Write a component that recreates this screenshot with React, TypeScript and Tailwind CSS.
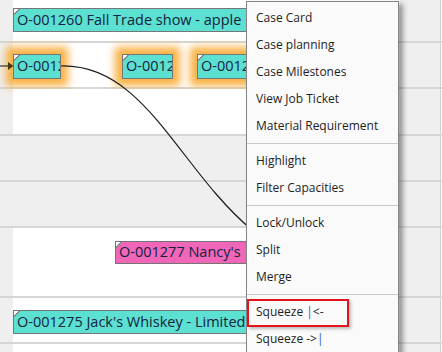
import type { ReactNode } from 'react';

// Gantt rows (top to bottom). Heights include the 2px grid line at the bottom.
const ROWS = [
  { h: 43, grey: false },
  { h: 46, grey: false },
  { h: 47, grey: false },
  { h: 46, grey: true },
  { h: 46, grey: true },
  { h: 70, grey: false },
  { h: 46, grey: false },
  { h: 20, grey: false },
];

function Bar({
  left,
  top,
  width,
  height,
  color,
  glow = false,
  children,
}: {
  left: number;
  top: number;
  width: number;
  height: number;
  color: string;
  glow?: boolean;
  children: ReactNode;
}) {
  return (
    <div
      className={`absolute overflow-hidden whitespace-nowrap border border-[#767676] pl-[3px] text-[14.5px] leading-none text-[#15233d] ${
        glow ? 'shadow-[0_0_8px_7px_rgba(248,165,35,0.85)]' : ''
      }`}
      style={{ left, top, width, height, backgroundColor: color }}
    >
      <span className="absolute top-[-1px] left-[-1px] h-[7px] w-[7px] bg-[linear-gradient(135deg,#ffffff_0_46%,#8a8a8a_46%_62%,transparent_62%)]" />
      <span className="flex h-full items-center">{children}</span>
    </div>
  );
}

function GanttRow({ h, grey, children }: { h: number; grey: boolean; children?: ReactNode }) {
  return (
    <div className="flex shrink-0 border-b-2 border-[#d6d6d6]" style={{ height: h }}>
      <div className="w-[13px] shrink-0 bg-[#efefef]" />
      <div className={`relative w-[387px] shrink-0 ${grey ? 'bg-[#efefef]' : 'bg-white'}`}>
        {children}
      </div>
      <div className="w-[40px] shrink-0 bg-[#efefef]" />
      <div className="w-[1px] shrink-0 bg-[#cfcfcf]" />
      <div className="w-[1px] shrink-0 bg-white" />
    </div>
  );
}

function MenuItem({ children }: { children: ReactNode }) {
  return (
    <div className="flex h-[27px] items-center pl-[9px]">
      <span className="whitespace-pre">{children}</span>
    </div>
  );
}

function Separator() {
  return (
    <div className="flex h-[8px] items-center">
      <div className="h-px w-full bg-[#c9c9c9]" />
    </div>
  );
}

const Pipe = () => <span className="text-[#2f5aa8]">|</span>;

export default function App() {
  return (
    <div className="relative h-[352px] w-[442px] overflow-hidden bg-white font-['Open_Sans',sans-serif]">
      <div className="flex flex-col">
        <GanttRow {...ROWS[0]}>
          <Bar left={0} top={8} width={260} height={24} color="#5ce0d2">
            O-001260 Fall Trade show - apple
          </Bar>
        </GanttRow>
        <GanttRow {...ROWS[1]}>
          <Bar left={0} top={11} width={48} height={25} color="#5ce0d2" glow>
            O-0012
          </Bar>
          <Bar left={109} top={11} width={51} height={25} color="#5ce0d2" glow>
            O-0012
          </Bar>
          <Bar left={184} top={11} width={70} height={25} color="#5ce0d2" glow>
            O-0012
          </Bar>
        </GanttRow>
        <GanttRow {...ROWS[2]} />
        <GanttRow {...ROWS[3]} />
        <GanttRow {...ROWS[4]} />
        <GanttRow {...ROWS[5]}>
          <Bar left={102} top={13} width={150} height={23} color="#f066b8">
            O-001277 Nancy's
          </Bar>
        </GanttRow>
        <GanttRow {...ROWS[6]}>
          <Bar left={0} top={12} width={250} height={24} color="#5ce0d2">
            O-001275 Jack's Whiskey - Limited
          </Bar>
        </GanttRow>
        <GanttRow {...ROWS[7]} />
      </div>

      {/* dependency link */}
      <svg className="pointer-events-none absolute inset-0" width={442} height={352} viewBox="0 0 442 352">
        <path d="M0 66 H9" stroke="#333" strokeWidth={1.2} />
        <path d="M8 62 L13.5 66 L8 70 Z" fill="#4a3a10" />
        <path d="M61 66 C 145 64, 178 168, 252 230" fill="none" stroke="#1a1a1a" strokeWidth={1.2} />
      </svg>

      {/* context menu */}
      <div className="absolute top-[1px] left-[246px] h-[370px] w-[153px] border border-[#858585] bg-[#fafafa] pt-[2px] text-[12px] text-[#1e1e1e] shadow-[4px_3px_5px_rgba(0,0,0,0.38)]">
        <MenuItem>Case Card</MenuItem>
        <MenuItem>Case planning</MenuItem>
        <MenuItem>Case Milestones</MenuItem>
        <MenuItem>View Job Ticket</MenuItem>
        <MenuItem>Material Requirement</MenuItem>
        <Separator />
        <MenuItem>Highlight</MenuItem>
        <MenuItem>Filter Capacities</MenuItem>
        <Separator />
        <MenuItem>Lock/Unlock</MenuItem>
        <MenuItem>Split</MenuItem>
        <MenuItem>Merge</MenuItem>
        <Separator />
        <div className="relative">
          <MenuItem>
            {'Squeeze '}
            <Pipe />
            {'<-'}
          </MenuItem>
          <span className="absolute top-[1px] left-0 h-[28px] w-[102px] border-2 border-[#e3141c] shadow-[2px_2px_3px_rgba(0,0,0,0.25)]" />
        </div>
        <MenuItem>
          {'Squeeze ->'}
          <Pipe />
        </MenuItem>
      </div>
    </div>
  );
}
